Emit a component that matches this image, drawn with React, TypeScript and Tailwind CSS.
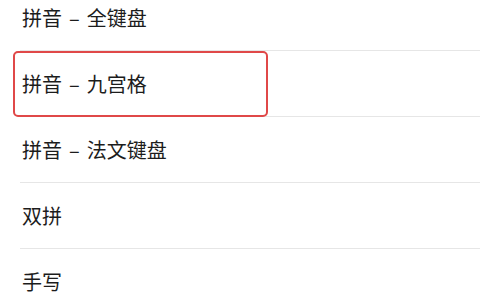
import React from "react";

const rows: [string, string | null][] = [
  ["拼音", "全键盘"],
  ["拼音", "九宫格"],
  ["拼音", "法文键盘"],
  ["双拼", null],
  ["手写", null],
];

export default function App() {
  return (
    <div
      className="w-[480px] h-[300px] overflow-hidden bg-white text-[#1c1c1c]"
      style={{ fontFamily: '"Noto Sans CJK SC", "Noto Sans", sans-serif' }}
    >
      <div className="-mt-[15px] flex flex-col">
        {rows.map(([a, b], i) => (
          <div key={i} className="relative">
            <div className="ml-[20px] h-[66px] flex items-center border-b border-[#e6e6e6] text-[20px] leading-none pl-[2px]">
              <span>{a}</span>
              {b && (
                <>
                  <span className="mx-[7px]">–</span>
                  <span>{b}</span>
                </>
              )}
            </div>
            {i === 1 && (
              <div className="absolute left-[13px] top-[0px] w-[255px] h-[66px] rounded-[5px] border-2 border-[#e04848]" />
            )}
          </div>
        ))}
      </div>
    </div>
  );
}
